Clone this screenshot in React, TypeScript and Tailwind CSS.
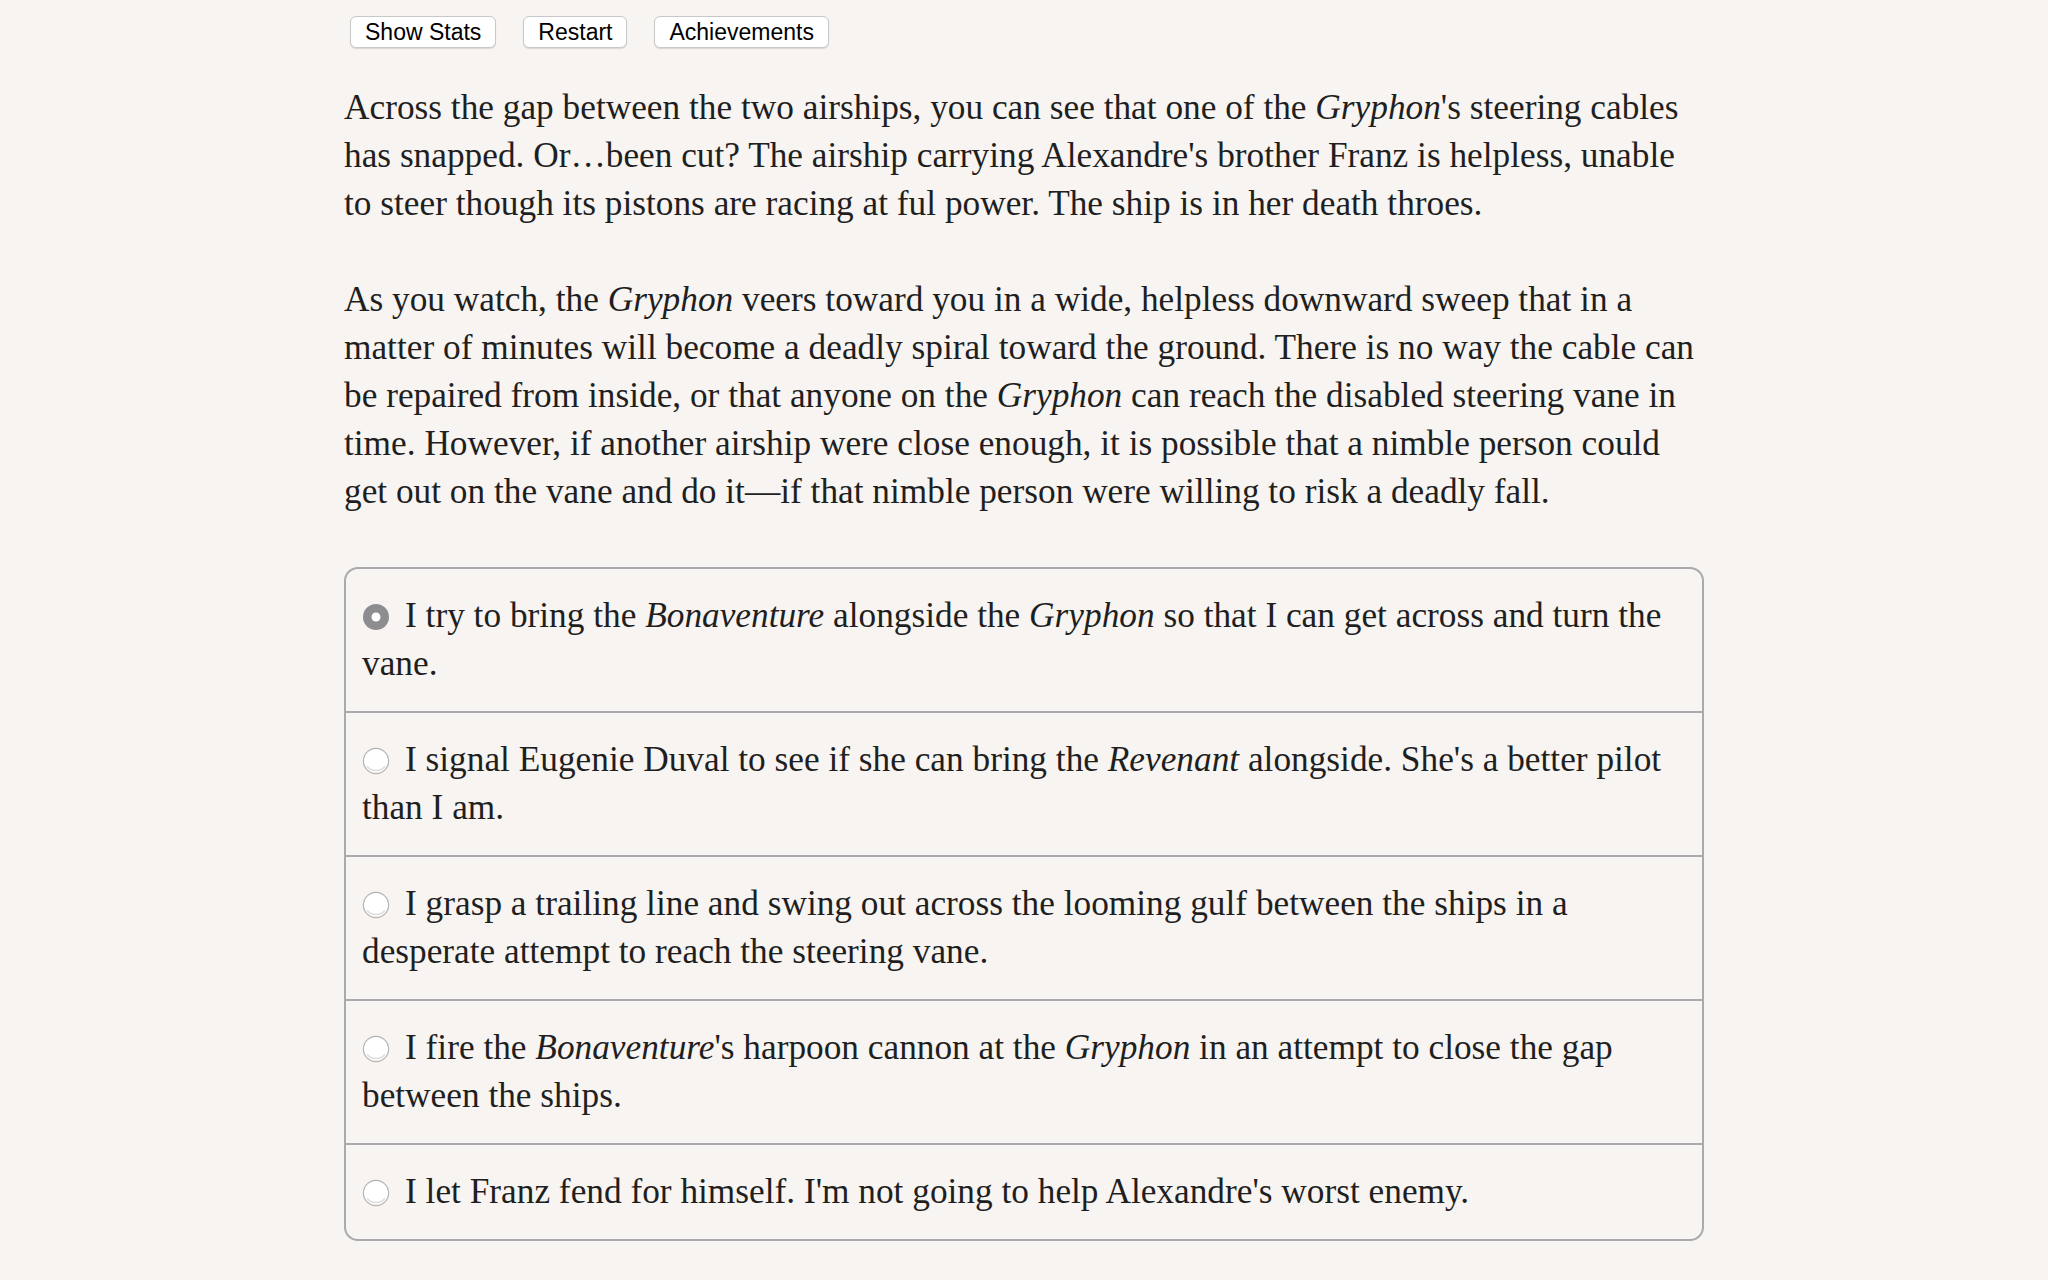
import { useState } from 'react';
import type { ReactNode } from 'react';

interface Choice {
  id: number;
  label: ReactNode;
}

const choices: Choice[] = [
  {
    id: 1,
    label: (
      <>
        I try to bring the <i>Bonaventure</i> alongside the <i>Gryphon</i> so that I can get across and turn the vane.
      </>
    ),
  },
  {
    id: 2,
    label: (
      <>
        I signal Eugenie Duval to see if she can bring the <i>Revenant</i> alongside. She's a better pilot than I am.
      </>
    ),
  },
  {
    id: 3,
    label: (
      <>I grasp a trailing line and swing out across the looming gulf between the ships in a desperate attempt to reach the steering vane.</>
    ),
  },
  {
    id: 4,
    label: (
      <>
        I fire the <i>Bonaventure</i>'s harpoon cannon at the <i>Gryphon</i> in an attempt to close the gap between the ships.
      </>
    ),
  },
  {
    id: 5,
    label: <>I let Franz fend for himself. I'm not going to help Alexandre's worst enemy.</>,
  },
];

const TopButton = ({ children }: { children: ReactNode }) => (
  <button className="h-8 px-[14px] bg-white border border-[#c8c8c8] rounded-[6px] shadow-[0_1px_1px_rgba(0,0,0,0.12)] text-[23px] leading-none text-black font-['Liberation_Sans',Arial,sans-serif]">
    {children}
  </button>
);

const Radio = ({ checked }: { checked: boolean }) => (
  <svg width="28" height="28" viewBox="0 0 28 28" className="inline-block align-[-4px] mr-[15px]">
    {checked ? (
      <>
        <circle cx="14" cy="14" r="13" fill="#8c8c91" />
        <circle cx="14" cy="14" r="4.5" fill="#ffffff" />
      </>
    ) : (
      <>
        <circle cx="14" cy="14" r="12.6" fill="#ffffff" stroke="#b4b4b4" strokeWidth="1.2" />
        <path d="M5 19a11 11 0 0 0 18 0" fill="none" stroke="#dedede" strokeWidth="1.5" />
      </>
    )}
  </svg>
);

export default function App() {
  const [selected, setSelected] = useState(1);

  return (
    <div className="min-h-screen bg-[#f7f4f1] text-[#1f1f1f]">
      <div className="max-w-[1360px] mx-auto pt-4 pb-10">
        <div className="flex gap-[27px] pl-[6px]">
          <TopButton>Show Stats</TopButton>
          <TopButton>Restart</TopButton>
          <TopButton>Achievements</TopButton>
        </div>

        <div className="mt-9 font-['Liberation_Serif','Times_New_Roman',serif] text-[35.3px] leading-[48px]">
          <p>
            Across the gap between the two airships, you can see that one of the <i>Gryphon</i>'s steering cables has
            snapped. Or…been cut? The airship carrying Alexandre's brother Franz is helpless, unable to steer though its
            pistons are racing at ful power. The ship is in her death throes.
          </p>
          <p className="mt-12">
            As you watch, the <i>Gryphon</i> veers toward you in a wide, helpless downward sweep that in a matter of
            minutes will become a deadly spiral toward the ground. There is no way the cable can be repaired from inside,
            or that anyone on the <i>Gryphon</i> can reach the disabled steering vane in time. However, if another
            airship were close enough, it is possible that a nimble person could get out on the vane and do it—if that
            nimble person were willing to risk a deadly fall.
          </p>

          <div className="mt-[51px] border-2 border-[#a9aaad] rounded-[14px] overflow-hidden">
            {choices.map((choice, i) => (
              <div
                key={choice.id}
                onClick={() => setSelected(choice.id)}
                className={`pl-[16px] pr-[14px] py-[23px] cursor-pointer ${i > 0 ? 'border-t-2 border-[#a9aaad]' : ''}`}
              >
                <Radio checked={selected === choice.id} />
                {choice.label}
              </div>
            ))}
          </div>
        </div>
      </div>
    </div>
  );
}
